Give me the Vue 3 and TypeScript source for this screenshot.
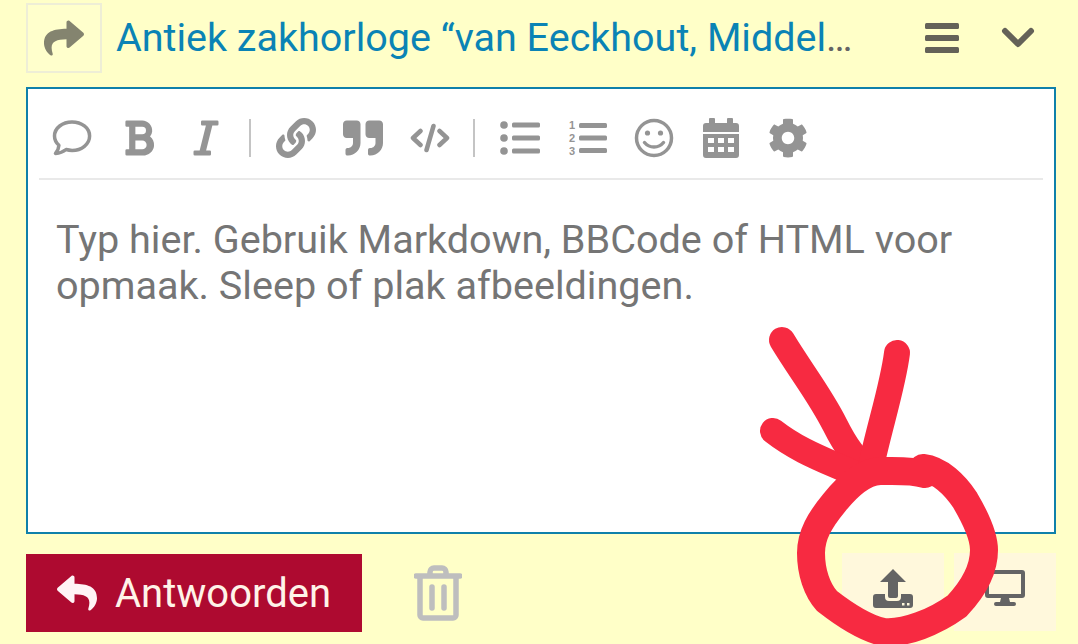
<template>
  <div class="page">
    <header class="head">
      <button class="share-btn">
        <svg class="share-icon" viewBox="0 0 512 512">
          <path d="M503.691 189.836L327.687 37.851C312.281 24.546 288 35.347 288 56.015v80.053C127.371 137.907 0 170.1 0 322.326c0 61.441 39.581 122.309 83.333 154.132 13.653 9.931 33.111-2.533 28.077-18.631C66.066 312.814 132.917 274.316 288 272.085V360c0 20.7 24.3 31.453 39.687 18.164l176.004-152c11.071-9.562 11.086-26.753 0-36.328z" />
        </svg>
      </button>
      <div class="title"><a>Antiek zakhorloge “van Eeckhout, Middel</a>…</div>
      <svg class="bars" viewBox="0 0 34 32">
        <rect x="0" y="1" width="34" height="6" rx="1.5" />
        <rect x="0" y="13" width="34" height="6" rx="1.5" />
        <rect x="0" y="25" width="34" height="6" rx="1.5" />
      </svg>
      <svg class="chevron" viewBox="0 0 34 24">
        <path d="M4 5l13 13L30 5" />
      </svg>
    </header>

    <section class="editor">
      <div class="toolbar">
        <span class="tool">
          <svg viewBox="0 0 40 40"><path class="line" d="M20 4C10.5 4 2.5 10 2.5 18c0 3.6 1.6 6.8 4.4 9.3-.2 3-1.4 5.900-3.400 8.200 4-.3 7.600-1.600 10.600-4 2 .6 4 .9 6 .9 9.500 0 17.500-6.200 17.500-14.400S29.500 4 20 4z" /></svg>
        </span>
        <span class="tool">
          <svg viewBox="0 0 384 512"><path d="M333.49 238a122 122 0 0 0 27-65.21C367.87 96.49 308 32 233.42 32H34a16 16 0 0 0-16 16v48a16 16 0 0 0 16 16h31.87v288H34a16 16 0 0 0-16 16v48a16 16 0 0 0 16 16h209.32c70.8 0 134.14-51.75 141-122.4 4.74-48.45-16.39-92.06-50.83-119.6zM145.66 112h87.76a48 48 0 0 1 0 96h-87.76zm87.76 288h-87.76V288h87.76a56 56 0 0 1 0 112z" /></svg>
        </span>
        <span class="tool">
          <svg viewBox="0 0 320 512"><path d="M320 48v32a16 16 0 0 1-16 16h-62.76l-80 320H208a16 16 0 0 1 16 16v32a16 16 0 0 1-16 16H16a16 16 0 0 1-16-16v-32a16 16 0 0 1 16-16h62.76l80-320H112a16 16 0 0 1-16-16V48a16 16 0 0 1 16-16h192a16 16 0 0 1 16 16z" /></svg>
        </span>
        <i class="sep" />
        <span class="tool">
          <svg viewBox="0 0 512 512"><path d="M326.612 185.391c59.747 59.809 58.927 155.698.36 214.59-.11.12-.24.25-.36.37l-67.2 67.2c-59.27 59.27-155.699 59.262-214.96 0-59.27-59.26-59.27-155.7 0-214.96l37.106-37.106c9.84-9.84 26.786-3.3 27.294 10.606.648 17.722 3.826 35.527 9.69 52.721 1.986 5.822.567 12.262-3.783 16.612l-13.087 13.087c-28.026 28.026-28.905 73.66-1.155 101.96 28.024 28.579 74.086 28.749 102.325.51l67.2-67.19c28.191-28.191 28.073-73.757 0-101.83-3.701-3.694-7.429-6.564-10.341-8.569a16.037 16.037 0 0 1-6.947-12.606c-.396-10.567 3.348-21.456 11.698-29.806l21.054-21.055c5.521-5.521 14.182-6.199 20.584-1.731a152.482 152.482 0 0 1 20.522 17.197zM467.547 44.449c-59.261-59.262-155.69-59.27-214.96 0l-67.2 67.2c-.12.12-.25.25-.36.37-58.566 58.892-59.387 154.781.36 214.59a152.454 152.454 0 0 0 20.521 17.196c6.402 4.468 15.064 3.789 20.584-1.731l21.054-21.055c8.35-8.35 12.094-19.239 11.698-29.806a16.037 16.037 0 0 0-6.947-12.606c-2.912-2.005-6.64-4.875-10.341-8.569-28.073-28.073-28.191-73.639 0-101.83l67.2-67.19c28.239-28.239 74.3-28.069 102.325.51 27.75 28.3 26.872 73.934-1.155 101.96l-13.087 13.087c-4.35 4.35-5.769 10.79-3.783 16.612 5.864 17.194 9.042 34.999 9.69 52.721.509 13.906 17.454 20.446 27.294 10.606l37.106-37.106c59.271-59.259 59.271-155.699.001-214.959z" /></svg>
        </span>
        <span class="tool">
          <svg viewBox="0 0 512 512"><path d="M464 32H336c-26.5 0-48 21.5-48 48v128c0 26.5 21.5 48 48 48h80v64c0 35.3-28.7 64-64 64h-8c-13.3 0-24 10.7-24 24v48c0 13.3 10.7 24 24 24h8c88.4 0 160-71.6 160-160V80c0-26.5-21.5-48-48-48zm-288 0H48C21.5 32 0 53.5 0 80v128c0 26.500 21.500 48 48 48h80v64c0 35.300-28.700 64-64 64h-8c-13.300 0-24 10.700-24 24v48c0 13.300 10.700 24 24 24h8c88.400 0 160-71.600 160-160V80c0-26.500-21.500-48-48-48z" /></svg>
        </span>
        <span class="tool">
          <svg viewBox="0 0 40 40"><path class="line code" d="M10.500 13l-7.500 7 7.500 7M29.500 13l7.500 7-7.500 7M23.500 8l-7 24" /></svg>
        </span>
        <i class="sep" />
        <span class="tool">
          <svg viewBox="0 0 40 40">
            <circle cx="4" cy="7" r="3.800" /><circle cx="4" cy="20" r="3.800" /><circle cx="4" cy="33" r="3.800" />
            <rect x="12" y="4.500" width="28" height="5" rx="1.500" /><rect x="12" y="17.500" width="28" height="5" rx="1.500" /><rect x="12" y="30.500" width="28" height="5" rx="1.500" />
          </svg>
        </span>
        <span class="tool">
          <svg viewBox="0 0 40 40">
            <text x="2" y="11" class="num">1</text><text x="2" y="24" class="num">2</text><text x="2" y="37" class="num">3</text>
            <rect x="12" y="5" width="28" height="5" rx="1.500" /><rect x="12" y="17.500" width="28" height="5" rx="1.500" /><rect x="12" y="30" width="28" height="5" rx="1.500" />
          </svg>
        </span>
        <span class="tool">
          <svg viewBox="0 0 40 40">
            <circle class="line" cx="20" cy="20" r="17.500" />
            <circle cx="13.500" cy="15" r="2.600" /><circle cx="26.500" cy="15" r="2.600" />
            <path class="line" d="M10.500 24.500c5 6 14 6 19 0" />
          </svg>
        </span>
        <span class="tool">
          <svg viewBox="0 0 40 40">
            <path fill-rule="evenodd" d="M9 0h4a1 1 0 0 1 1 1v4h12V1a1 1 0 0 1 1-1h4a1 1 0 0 1 1 1v4h3a3 3 0 0 1 3 3v6H2V8a3 3 0 0 1 3-3h3V1a1 1 0 0 1 1-1zM2 16h36v21a3 3 0 0 1-3 3H5a3 3 0 0 1-3-3zm5 4v5h6v-5zm10 0v5h6v-5zm10 0v5h6v-5zM7 29v5h6v-5zm10 0v5h6v-5zm10 0v5h6v-5z" />
          </svg>
        </span>
        <span class="tool">
          <svg viewBox="0 0 512 512"><path d="M487.4 315.700l-42.600-24.600c4.300-23.200 4.300-47 0-70.200l42.600-24.600c4.900-2.800 7.100-8.600 5.500-14-11.100-35.600-30-67.800-54.700-94.600-3.800-4.100-10-5.100-14.800-2.300L380.800 110c-17.900-15.400-38.500-27.300-60.800-35.100V25.800c0-5.600-3.900-10.500-9.400-11.700-36.700-8.200-74.300-7.800-109.200 0-5.500 1.200-9.400 6.100-9.400 11.700V75c-22.200 7.900-42.800 19.800-60.800 35.100L88.700 85.500c-4.900-2.800-11-1.900-14.800 2.300-24.700 26.700-43.600 58.900-54.700 94.600-1.700 5.400.6 11.200 5.500 14L67.300 221c-4.300 23.200-4.300 47 0 70.200l-42.600 24.600c-4.900 2.800-7.100 8.600-5.500 14 11.100 35.600 30 67.800 54.700 94.600 3.800 4.100 10 5.100 14.800 2.300l42.600-24.600c17.900 15.400 38.500 27.300 60.800 35.100v49.200c0 5.600 3.900 10.500 9.400 11.700 36.700 8.200 74.300 7.800 109.200 0 5.500-1.200 9.400-6.100 9.400-11.700v-49.200c22.200-7.900 42.800-19.800 60.800-35.100l42.600 24.600c4.900 2.800 11 1.900 14.800-2.300 24.700-26.700 43.600-58.900 54.700-94.600 1.500-5.500-.7-11.300-5.600-14.100zM256 336c-44.100 0-80-35.900-80-80s35.900-80 80-80 80 35.900 80 80-35.900 80-80 80z" /></svg>
        </span>
      </div>
      <p class="placeholder">Typ hier. Gebruik Markdown, BBCode of HTML voor opmaak. Sleep of plak afbeeldingen.</p>
    </section>

    <footer class="foot">
      <button class="reply">
        <svg class="reply-icon" viewBox="0 0 512 512">
          <path d="M8.309 189.836L184.313 37.851C199.719 24.546 224 35.347 224 56.015v80.053c160.629 1.839 288 34.032 288 186.258 0 61.441-39.581 122.309-83.333 154.132-13.653 9.931-33.111-2.533-28.077-18.631 45.344-145.012-21.507-183.51-176.59-185.742V360c0 20.7-24.3 31.453-39.687 18.164l-176.004-152c-11.071-9.562-11.086-26.753 0-36.328z" />
        </svg>
        Antwoorden
      </button>
      <svg class="trash" viewBox="0 0 48 56">
        <path class="trash-line" d="M2 11h44M16 10V7a4 4 0 0 1 4-4h8a4 4 0 0 1 4 4v3M6 11v39a3 3 0 0 0 3 3h30a3 3 0 0 0 3-3V11M18 22v21M30 22v21" />
      </svg>
      <div class="mode">
        <span class="mode-btn">
          <svg class="mode-icon" viewBox="0 0 40 40">
            <path d="M20 1l13 13h-8v14a2 2 0 0 1-2 2h-6a2 2 0 0 1-2-2V14H7z" />
            <path fill-rule="evenodd" d="M3 26h9v3a4 4 0 0 0 4 4h8a4 4 0 0 0 4-4v-3h9a3 3 0 0 1 3 3v8a3 3 0 0 1-3 3H3a3 3 0 0 1-3-3v-8a3 3 0 0 1 3-3zm26 9v2.500h2.500V35zm5 0v2.500h2.500V35z" />
          </svg>
        </span>
        <span class="mode-btn">
          <svg class="mode-icon" viewBox="0 0 40 36">
            <path fill-rule="evenodd" d="M3 0h34a3 3 0 0 1 3 3v22a3 3 0 0 1-3 3H24l1 4h4a2 2 0 0 1 0 4H11a2 2 0 0 1 0-4h4l1-4H3a3 3 0 0 1-3-3V3a3 3 0 0 1 3-3zm1 4v20h32V4z" />
          </svg>
        </span>
      </div>
    </footer>

    <!-- hand drawn marker on top of the screenshot -->
    <svg class="scribble" viewBox="0 0 1078 644">
      <path d="M782 340C800 370 820 395 835 425S860 462 867 470" />
      <path d="M897 353C893 385 880 425 872 462" />
      <path d="M773 431C800 452 825 460 860 476" />
      <path class="ring" d="M925 474C912 470 895 471 880 471C862 472 846 488 834 503C820 520 811 535 811 553C811 572 817 590 827 601C845 615 865 628 883 632C905 634 935 622 957 606C972 590 984 570 984 550C984 535 975 517 965 500C955 485 940 470 923 468" />
    </svg>
  </div>
</template>

<script setup lang="ts">
</script>

<style>
html,
body {
  margin: 0;
  background: #ffffc8;
}
</style>

<style scoped>
.page {
  position: relative;
  box-sizing: border-box;
  width: 1078px;
  height: 644px;
  padding: 3px 22px 0 26px;
  overflow: hidden;
  background: #ffffc8;
  font-family: Roboto, "Liberation Sans", sans-serif;
}
.head {
  display: flex;
  align-items: center;
  height: 70px;
}
.share-btn {
  display: flex;
  align-items: center;
  justify-content: center;
  box-sizing: border-box;
  width: 76px;
  height: 70px;
  padding: 0;
  border: 2px solid #eeeed6;
  background: #ffffcc;
}
.share-icon {
  width: 40px;
  height: 40px;
  fill: #84846f;
}
.title {
  flex: 1;
  margin-left: 14px;
  font-size: 39.5px;
  line-height: 70px;
  white-space: nowrap;
  color: #646464;
}
.title a {
  color: #0a83b5;
}
.bars {
  width: 34px;
  height: 32px;
  margin-right: 42px;
  fill: #646258;
}
.chevron {
  width: 34px;
  height: 24px;
  margin-right: 21px;
  fill: none;
  stroke: #646258;
  stroke-width: 6;
  stroke-linecap: round;
  stroke-linejoin: round;
}
.editor {
  box-sizing: border-box;
  height: 447px;
  margin-top: 14px;
  border: 2px solid #0f80aa;
  background: #fff;
}
.toolbar {
  display: flex;
  align-items: center;
  height: 40px;
  margin: 0 11px;
  padding: 29px 0 20px;
  border-bottom: 2px solid #e9e9e9;
}
.tool {
  display: flex;
  align-items: center;
  justify-content: center;
  width: 67px;
  height: 40px;
}
.tool:first-child {
  margin-left: -1px;
}
.tool svg {
  width: 40px;
  height: 40px;
  fill: #949494;
}
.line {
  fill: none;
  stroke: #949494;
  stroke-width: 3.5;
  stroke-linecap: round;
  stroke-linejoin: round;
}
.code {
  stroke-width: 4.5;
}
.num {
  font-family: "Liberation Sans", sans-serif;
  font-size: 11px;
  font-weight: 700;
}
.sep {
  width: 2px;
  height: 38px;
  margin: 0 11.5px 0 9.5px;
  background: #c4c4c4;
}
.placeholder {
  margin: 37px 28px 0;
  font-size: 39.6px;
  line-height: 46px;
  color: #757575;
}
.foot {
  display: flex;
  align-items: center;
  margin-top: 20px;
}
.reply {
  display: flex;
  align-items: center;
  justify-content: center;
  gap: 18px;
  width: 336px;
  height: 78px;
  padding: 0;
  border: 0;
  background: #ae0a30;
  color: #fff3e8;
  font-family: inherit;
  font-size: 40px;
}
.reply-icon {
  width: 40px;
  height: 40px;
  fill: #fff3f5;
}
.trash {
  width: 48px;
  height: 56px;
  margin-left: 52px;
}
.trash-line {
  fill: none;
  stroke: #bebebe;
  stroke-width: 5.5;
  stroke-linecap: round;
  stroke-linejoin: round;
}
.mode {
  display: flex;
  gap: 10px;
  margin-left: auto;
  margin-top: -2px;
}
.mode-btn {
  display: flex;
  align-items: center;
  justify-content: center;
  box-sizing: border-box;
  width: 102px;
  height: 78px;
  padding-bottom: 8px;
  background: #fff8dc;
}
.mode-icon {
  width: 40px;
  height: 40px;
  fill: #646464;
}
.scribble {
  position: absolute;
  top: 0;
  left: 0;
  width: 1078px;
  height: 644px;
  fill: none;
  stroke: #f72a41;
  stroke-width: 26;
  stroke-linecap: round;
  stroke-linejoin: round;
}
.ring {
  stroke-width: 28;
}
</style>
